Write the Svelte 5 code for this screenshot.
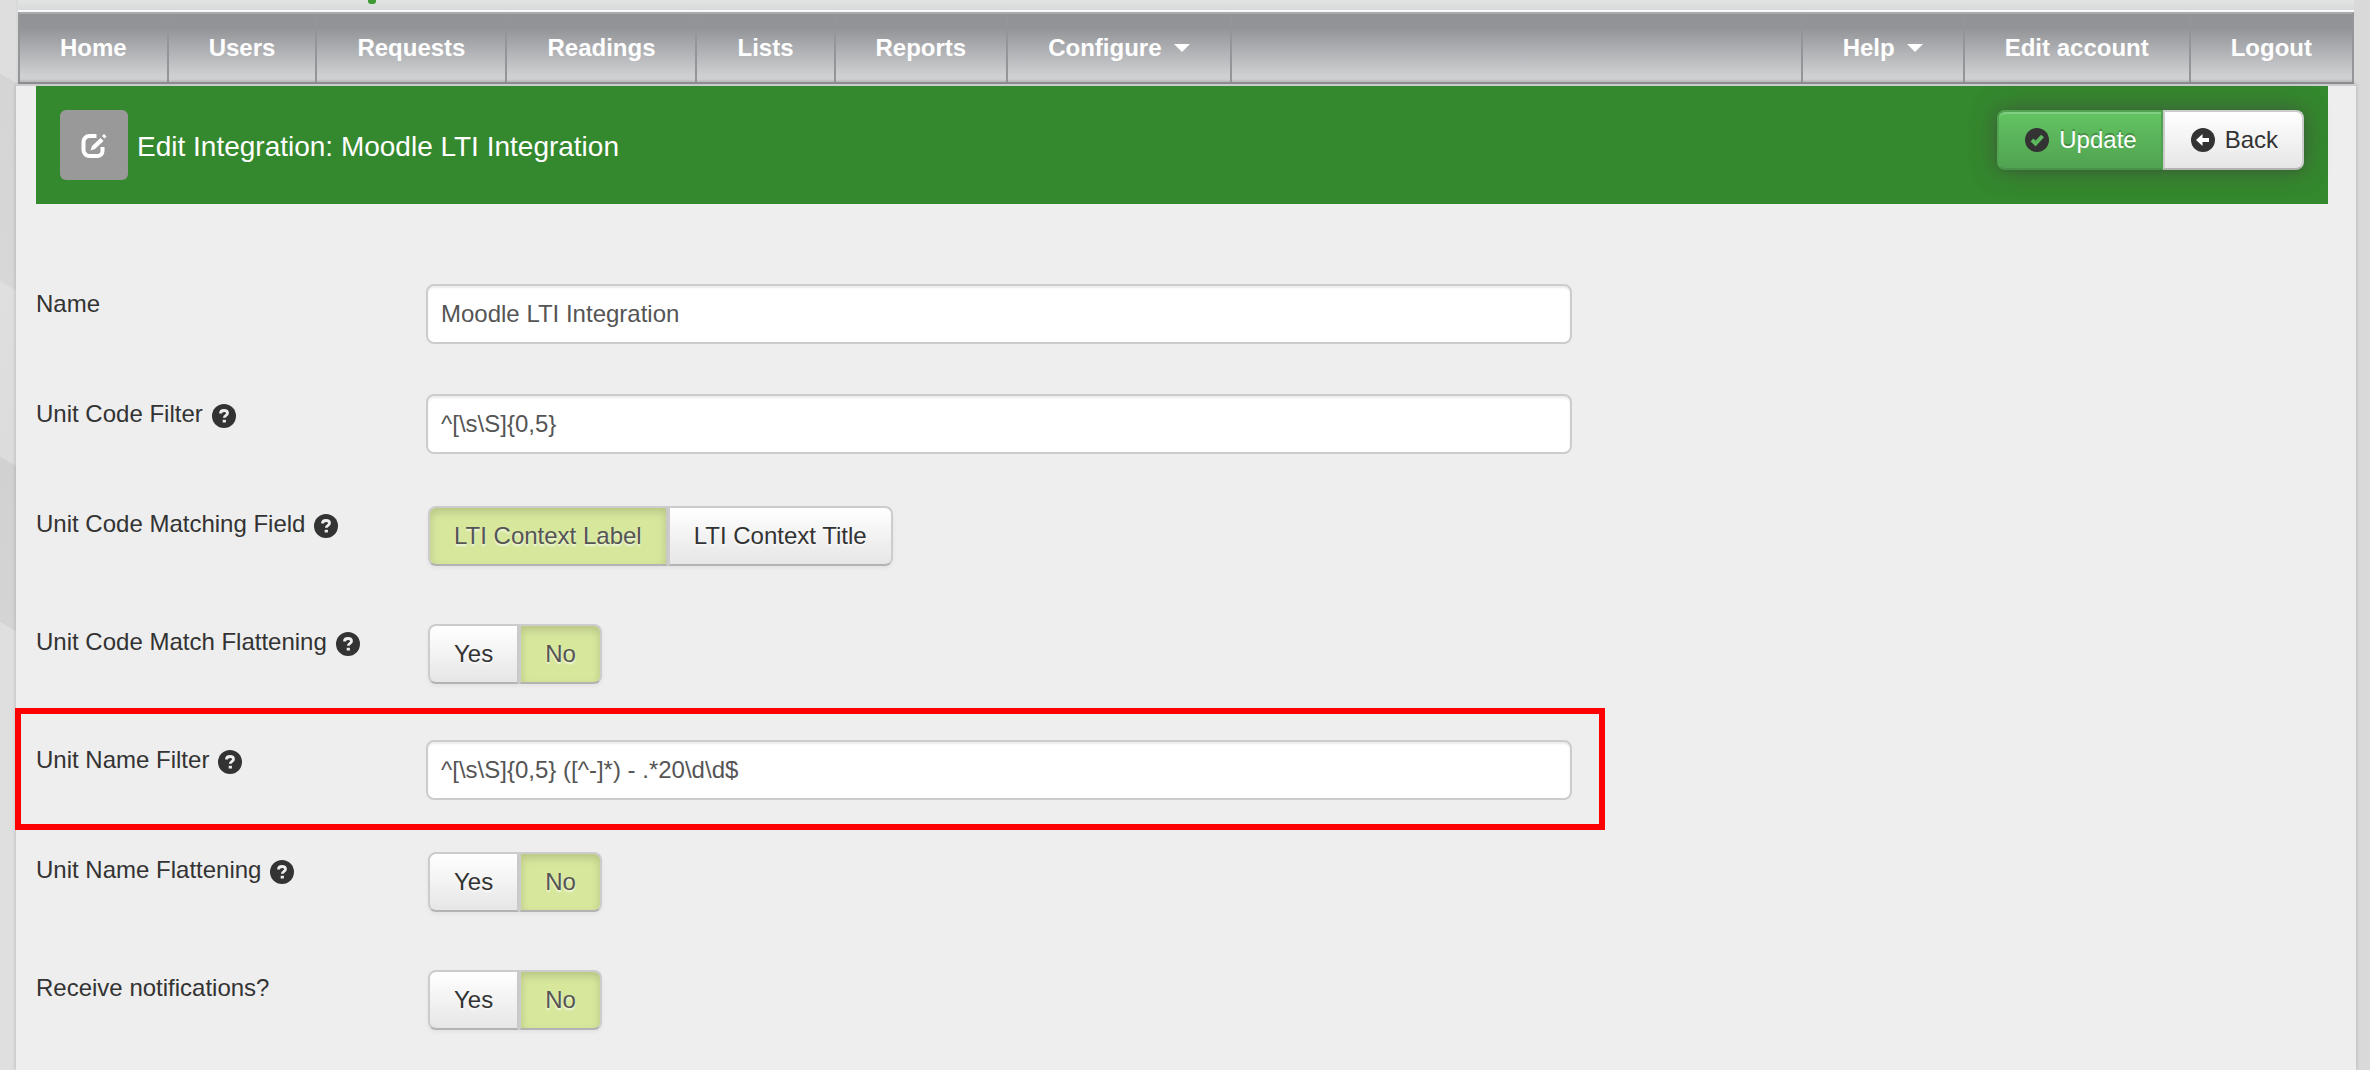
<script>
    const nav = [
        { text: 'Home' },
        { text: 'Users' },
        { text: 'Requests' },
        { text: 'Readings' },
        { text: 'Lists' },
        { text: 'Reports' },
        { text: 'Configure', caret: true },
    ];

    const account = [
        { text: 'Help', caret: true },
        { text: 'Edit account' },
        { text: 'Logout' },
    ];

    let fields = [
        { id: 'name', label: 'Name', value: 'Moodle LTI Integration' },
        { id: 'code-filter', label: 'Unit Code Filter', help: true, value: '^[\\s\\S]{0,5}' },
        { id: 'code-field', label: 'Unit Code Matching Field', help: true, options: ['LTI Context Label', 'LTI Context Title'], value: 'LTI Context Label' },
        { id: 'code-flat', label: 'Unit Code Match Flattening', help: true, options: ['Yes', 'No'], value: 'No' },
        { id: 'name-filter', label: 'Unit Name Filter', help: true, marked: true, value: '^[\\s\\S]{0,5} ([^-]*) - .*20\\d\\d$' },
        { id: 'name-flat', label: 'Unit Name Flattening', help: true, options: ['Yes', 'No'], value: 'No' },
        { id: 'notify', label: 'Receive notifications?', options: ['Yes', 'No'], value: 'No' },
    ];
</script>

<div class="page">
    <header><span class="logo"></span></header>

    <nav>
        <ul>
            {#each nav as item}
                <li><a href="#top">{item.text}{#if item.caret}<b class="caret"></b>{/if}</a></li>
            {/each}
        </ul>
        <ul class="right">
            {#each account as item}
                <li><a href="#top">{item.text}{#if item.caret}<b class="caret"></b>{/if}</a></li>
            {/each}
        </ul>
    </nav>

    <main>
        <div class="title">
            <span class="badge">
                <svg viewBox="0 0 28 28" width="28" height="28">
                    <path d="M16.500 5H9.500a6 6 0 0 0-6 6v8a6 6 0 0 0 6 6h8a5 5 0 0 0 5-5v-4" fill="none" stroke="#fff" stroke-width="4"/>
                    <path d="M10.500 19.500l1.500-4.500L20.500 7l3 3L15 18z" fill="#fff"/>
                    <path d="M22 5l2-2 2.500 2.500L24.500 7.500z" fill="#fff"/>
                </svg>
            </span>
            <h1>Edit Integration: Moodle LTI Integration</h1>
            <div class="actions">
                <button class="btn primary">
                    <svg viewBox="0 0 28 28" width="28" height="28">
                        <circle cx="14" cy="14" r="12" fill="#333"/>
                        <path d="M9 14l3.500 3.500 7-7.500" fill="none" stroke="#5cb85c" stroke-width="4"/>
                    </svg>
                    Update
                </button>
                <button class="btn">
                    <svg viewBox="0 0 28 28" width="28" height="28">
                        <circle cx="14" cy="14" r="12" fill="#333"/>
                        <path d="M7 14l6.500-6v4H20v4h-6.500v4z" fill="#fff"/>
                    </svg>
                    Back
                </button>
            </div>
        </div>

        <form on:submit|preventDefault>
            {#each fields as field}
                <div class="row" class:marked={field.marked}>
                    <label for={field.id} id={field.id + '-label'}>
                        {field.label}
                        {#if field.help}
                            <svg class="help" viewBox="0 0 24 24" width="24" height="24">
                                <circle cx="12" cy="12" r="12" fill="#333"/>
                                <path d="M8.500 9.500c0-2 1.500-3 3.500-3s3.500 1 3.500 2.700c0 2.300-3.200 2-3.200 4.600" fill="none" stroke="#eee" stroke-width="2.800"/>
                                <path d="M10.700 15.800h3.200v2.700h-3.200z" fill="#eee"/>
                            </svg>
                        {/if}
                    </label>
                    {#if field.options}
                        <div class="group" id={field.id} role="group" aria-labelledby={field.id + '-label'}>
                            {#each field.options as option}
                                <button type="button" class="btn" class:active={field.value === option}
                                    aria-pressed={field.value === option}
                                    on:click={() => field.value = option}>{option}</button>
                            {/each}
                        </div>
                    {:else}
                        <input id={field.id} type="text" bind:value={field.value}/>
                    {/if}
                </div>
            {/each}
        </form>
    </main>
</div>

<style>
    :global(body) {
        background:
            linear-gradient(210deg, #dedede 71px, #d5d5d5 72px, #d7d7d7 251px, #dfdfdf 252px, #dcdcdc 403px, #d1d1d1 404px, #d4d4d4 546px, #dfdfdf 547px) no-repeat 0 0 / 16px 100%,
            #d9d9d9;
        font-family: "Liberation Sans", Arial, sans-serif;
        font-size: 24px;
        line-height: 40px;
        color: #333;
    }

    .page {
        margin: 0 14px 0 16px;
        min-height: 100vh;
        display: flex;
        flex-direction: column;
    }

    header {
        height: 12px;
        margin: 0 2px;
        box-sizing: border-box;
        background: linear-gradient(#e2e4e3, #d9dadc);
        border-bottom: 2px solid #f8f8f8;
    }

    .logo {
        display: block;
        width: 8px;
        height: 4px;
        margin-left: 350px;
        border-radius: 0 0 3px 3px;
        background: #3d9a35;
    }

    nav {
        display: flex;
        justify-content: space-between;
        height: 72px;
        margin: 0 2px;
        box-sizing: border-box;
        border: 2px solid #939598;
        border-top-color: #a9aaac;
        background: linear-gradient(#929397, #939498 14px, #cfd0d2 62px, #cfd0d2 65px, #b9babc);
    }

    ul {
        display: flex;
        margin: 0;
        padding: 0;
        list-style: none;
    }

    li {
        border-right: 2px solid #939598;
    }

    .right li {
        border-right: 0;
        border-left: 2px solid #939598;
    }

    nav a {
        display: flex;
        align-items: center;
        padding: 14px 40px;
        color: #fff;
        font-weight: bold;
        text-decoration: none;
    }

    .caret {
        margin-left: 12px;
        border: 8px solid transparent;
        border-top-color: #fff;
        border-bottom: 0;
    }

    main {
        flex: 1;
        padding: 0 28px 0 20px;
        background: #eee;
        border-top: 2px solid #ccc;
        box-shadow: 0 0 4px rgba(0, 0, 0, 0.2);
    }

    .title {
        display: flex;
        height: 118px;
        box-sizing: border-box;
        padding: 24px;
        background: #34882d;
    }

    .badge {
        display: flex;
        align-items: center;
        justify-content: center;
        width: 68px;
        height: 70px;
        border-radius: 6px;
        background: #999;
    }

    h1 {
        flex: 1;
        margin: 17px 0 0 9px;
        font-size: 28px;
        font-weight: normal;
        line-height: 40px;
        color: #fff;
    }

    .actions {
        display: flex;
        height: 60px;
        border-radius: 8px;
        box-shadow: 0 0 24px rgba(68, 68, 68, 0.7);
    }

    .btn {
        display: flex;
        align-items: center;
        gap: 8px;
        height: 60px;
        padding: 0 24px;
        border: 2px solid #ccc;
        border-bottom-color: #b3b3b3;
        background: linear-gradient(#fff, #e6e6e6);
        box-shadow: inset 0 2px 0 rgba(255, 255, 255, 0.2), 0 2px 4px rgba(0, 0, 0, 0.05);
        color: #333;
        font: inherit;
        text-shadow: 0 2px 2px rgba(255, 255, 255, 0.75);
        cursor: pointer;
    }

    .btn:first-child {
        border-radius: 8px 0 0 8px;
    }

    .btn:last-child {
        border-radius: 0 8px 8px 0;
    }

    .btn.active {
        background: #d7e79c;
        box-shadow: inset 0 4px 8px rgba(0, 0, 0, 0.15), 0 2px 4px rgba(0, 0, 0, 0.05);
        color: #555;
    }

    .btn.primary {
        border-color: #51a351;
        border-bottom-color: #499249;
        background: linear-gradient(#62c462, #51a351);
        color: #fff;
        text-shadow: 0 -2px 0 rgba(0, 0, 0, 0.25);
    }

    form {
        padding-top: 80px;
    }

    .row {
        display: grid;
        grid-template-columns: 390px 1fr;
        align-items: start;
        position: relative;
        padding-bottom: 50px;
    }

    .row:has(.group) {
        padding-bottom: 56px;
    }

    .row:last-child {
        padding-bottom: 0;
    }

    .marked::after {
        content: "";
        position: absolute;
        left: -21px;
        top: -32px;
        width: calc(50% + 444px);
        height: 122px;
        box-sizing: border-box;
        border: 6px solid #f00;
        pointer-events: none;
    }

    label {
        display: flex;
        align-items: center;
        gap: 9px;
    }

    .help {
        margin-top: 4px;
    }

    .group {
        display: flex;
        margin: 2px 0 0 2px;
    }

    input {
        width: calc(50vw - 39px);
        height: 60px;
        box-sizing: border-box;
        padding: 0 13px;
        border: 2px solid #ccc;
        border-radius: 8px;
        background: #fff;
        box-shadow: inset 0 2px 2px rgba(0, 0, 0, 0.075);
        color: #555;
        font: inherit;
    }
</style>
